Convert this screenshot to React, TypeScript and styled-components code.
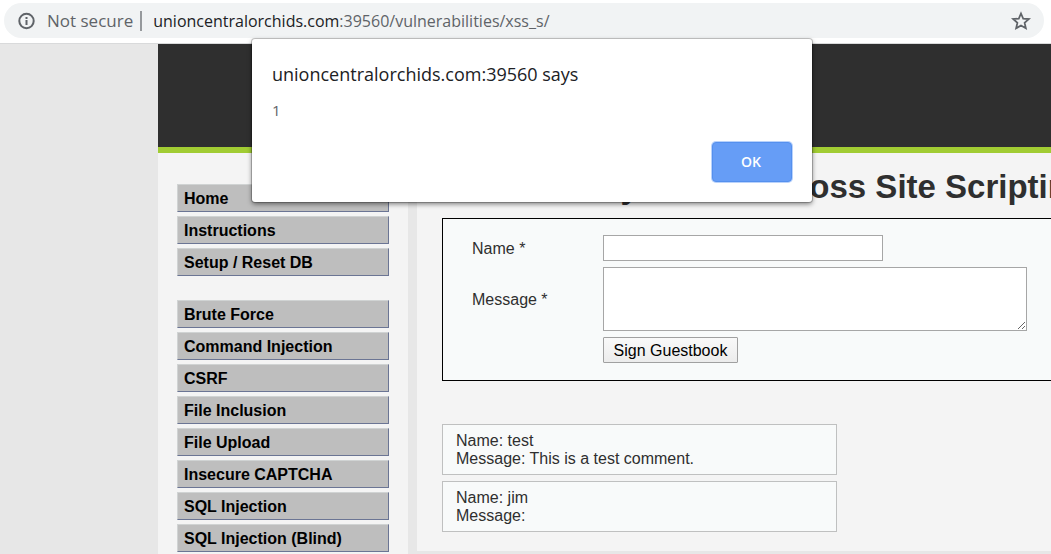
import React from "react";
import styled, { createGlobalStyle } from "styled-components";

const GlobalStyle = createGlobalStyle`
  * { box-sizing: border-box; }
  body {
    margin: 0;
    background: #e7e7e7;
    color: #2f2f2f;
    font: 16px/18px "Liberation Sans", Arial, sans-serif;
  }
`;

const Shell = styled.div`
  position: relative;
  height: 100vh;
  overflow: hidden;
`;

const AddressBar = styled.div`
  padding: 3px 7px 5px 4px;
  background: #fff;
  border-bottom: 1px solid #d9dadb;
`;

const Omnibox = styled.div`
  display: flex;
  align-items: center;
  height: 35px;
  padding: 0 12px;
  border-radius: 18px;
  background: #f1f3f4;
  color: #5f6368;
  font: 17px/24px "Open Sans", "Segoe UI", sans-serif;
`;

const Security = styled.span`
  padding: 0 7px 0 10px;
`;

const Divider = styled.span`
  width: 2px;
  height: 20px;
  margin-right: 11px;
  background: #96999c;
`;

const Url = styled.span`
  flex: 1;
  font-size: 16px;
  white-space: nowrap;
`;

const Host = styled.span`
  color: #202124;
`;

const StarButton = styled.button`
  display: flex;
  padding: 0;
  border: 0;
  background: none;
  color: #5f6368;
`;

const Page = styled.div`
  min-width: 1100px;
  margin-left: 158px;
`;

const Header = styled.header`
  height: 109px;
  background: #2f2f2f;
  border-bottom: 6px solid #a1cc33;
`;

const Columns = styled.div`
  display: flex;
  align-items: flex-start;
`;

const Sidebar = styled.nav`
  display: flex;
  flex-direction: column;
  gap: 24px;
  width: 250px;
  margin-right: 9px;
  padding: 31px 19px;
  background: #f4f4f4;
`;

const MenuGroup = styled.ul`
  display: flex;
  flex-direction: column;
  gap: 4px;
  margin: 0;
  padding: 0;
  list-style: none;
`;

const MenuLink = styled.a`
  display: block;
  height: 28px;
  padding: 5px 6px 3px;
  border: 1px solid;
  border-color: #d0d3d3 #6b7594 #6b7594 #d0d3d3;
  background: #bebebe;
  color: #000;
  font-weight: bold;
  text-decoration: none;
`;

const Content = styled.main`
  flex: 1;
  padding: 14px 25px 19px;
  background: #f4f4f4;
`;

const Title = styled.h1`
  margin: 0 0 11px;
  font-size: 33px;
  line-height: 40px;
  white-space: nowrap;
`;

const GuestForm = styled.form`
  display: grid;
  grid-template-columns: 131px 1fr;
  gap: 6px 0;
  align-items: center;
  justify-items: start;
  margin-bottom: 43px;
  padding: 16px 29px 17px;
  border: 1px solid #000;
  background: #f8fafa;
`;

const FieldLabel = styled.label`
  padding-top: 2px;
`;

const NameInput = styled.input`
  width: 280px;
  height: 26px;
  border: 1px solid #a6a6a6;
  background: #fff;
`;

const MessageInput = styled.textarea`
  display: block;
  width: 424px;
  height: 64px;
  border: 1px solid #a6a6a6;
  background: #fff;
`;

const SignButton = styled.button`
  grid-column: 2;
  width: 135px;
  height: 26px;
  padding: 2px 0 0;
  border: 1px solid #a0a0a0;
  border-radius: 1px;
  background: linear-gradient(#f9f9f9, #ececec);
  color: #000;
  font: inherit;
  white-space: nowrap;
`;

const Comments = styled.div`
  display: flex;
  flex-direction: column;
  gap: 6px;
  width: 395px;
`;

const Comment = styled.div`
  padding: 7px 13px 6px;
  border: 1px solid #bfc0c0;
  background: #f8fafa;
`;

const Dialog = styled.div`
  position: absolute;
  top: 39px;
  left: 252px;
  display: flex;
  flex-direction: column;
  width: 560px;
  height: 163px;
  padding: 23px 20px 20px;
  border-radius: 3px;
  background: #fff;
  box-shadow: 0 0 0 1px rgba(0, 0, 0, 0.2), 0 2px 5px rgba(0, 0, 0, 0.5);
  font-family: "Open Sans", "Segoe UI", sans-serif;
`;

const DialogTitle = styled.h2`
  margin: 0 0 12px;
  color: #202124;
  font-size: 18px;
  font-weight: normal;
  line-height: 24px;
`;

const DialogText = styled.p`
  flex: 1;
  margin: 0;
  color: #5f6368;
  font-size: 15px;
  line-height: 24px;
`;

const OkButton = styled.button`
  align-self: flex-end;
  width: 80px;
  height: 40px;
  padding: 0 2px 0 0;
  border: 1px solid #5590ee;
  border-radius: 4px;
  background: #669df6;
  box-shadow: 0 0 0 1px #b9d2fb;
  color: #fff;
  font: 600 14px/20px "Open Sans", "Segoe UI", sans-serif;
`;

const InfoIcon = () => (
  <svg width="21" height="20" viewBox="0 0 21 20" fill="none" stroke="currentColor" strokeWidth="2" aria-hidden="true">
    <circle cx="10.5" cy="10" r="7.2" />
    <path d="M10.5 9v5M10.5 6v2" />
  </svg>
);

const StarIcon = () => (
  <svg width="22" height="22" viewBox="2.5 2.2 19 19" fill="none" stroke="currentColor" strokeWidth="1.5" strokeMiterlimit="8" aria-hidden="true">
    <path d="M12 5.2l1.9 4.4 4.9.4-3.7 3.2 1.1 4.8-4.2-2.5-4.2 2.5 1.1-4.8-3.7-3.2 4.9-.4z" />
  </svg>
);

const menuGroups = [
  ["Home", "Instructions", "Setup / Reset DB"],
  [
    "Brute Force",
    "Command Injection",
    "CSRF",
    "File Inclusion",
    "File Upload",
    "Insecure CAPTCHA",
    "SQL Injection",
    "SQL Injection (Blind)",
  ],
];

const comments = [
  { name: "test", message: "This is a test comment." },
  { name: "jim", message: "" },
];

export default function App() {
  return (
    <Shell>
      <GlobalStyle />
      <AddressBar>
        <Omnibox>
          <InfoIcon />
          <Security>Not secure</Security>
          <Divider />
          <Url>
            <Host>unioncentralorchids.com</Host>:39560/vulnerabilities/xss_s/
          </Url>
          <StarButton type="button" aria-label="Bookmark this page">
            <StarIcon />
          </StarButton>
        </Omnibox>
      </AddressBar>
      <Page>
        <Header />
        <Columns>
          <Sidebar>
            {menuGroups.map((group) => (
              <MenuGroup key={group[0]}>
                {group.map((label) => (
                  <li key={label}>
                    <MenuLink href="#">{label}</MenuLink>
                  </li>
                ))}
              </MenuGroup>
            ))}
          </Sidebar>
          <Content>
            <Title>Vulnerability: Stored Cross Site Scripting (XSS)</Title>
            <GuestForm onSubmit={(event) => event.preventDefault()}>
              <FieldLabel htmlFor="guest-name">Name *</FieldLabel>
              <NameInput id="guest-name" type="text" />
              <FieldLabel htmlFor="guest-message">Message *</FieldLabel>
              <MessageInput id="guest-message" />
              <SignButton type="submit">Sign Guestbook</SignButton>
            </GuestForm>
            <Comments>
              {comments.map((comment) => (
                <Comment key={comment.name}>
                  <div>Name: {comment.name}</div>
                  <div>Message: {comment.message}</div>
                </Comment>
              ))}
            </Comments>
          </Content>
        </Columns>
      </Page>
      <Dialog role="alertdialog" aria-labelledby="dialog-title">
        <DialogTitle id="dialog-title">unioncentralorchids.com:39560 says</DialogTitle>
        <DialogText>1</DialogText>
        <OkButton type="button">OK</OkButton>
      </Dialog>
    </Shell>
  );
}
